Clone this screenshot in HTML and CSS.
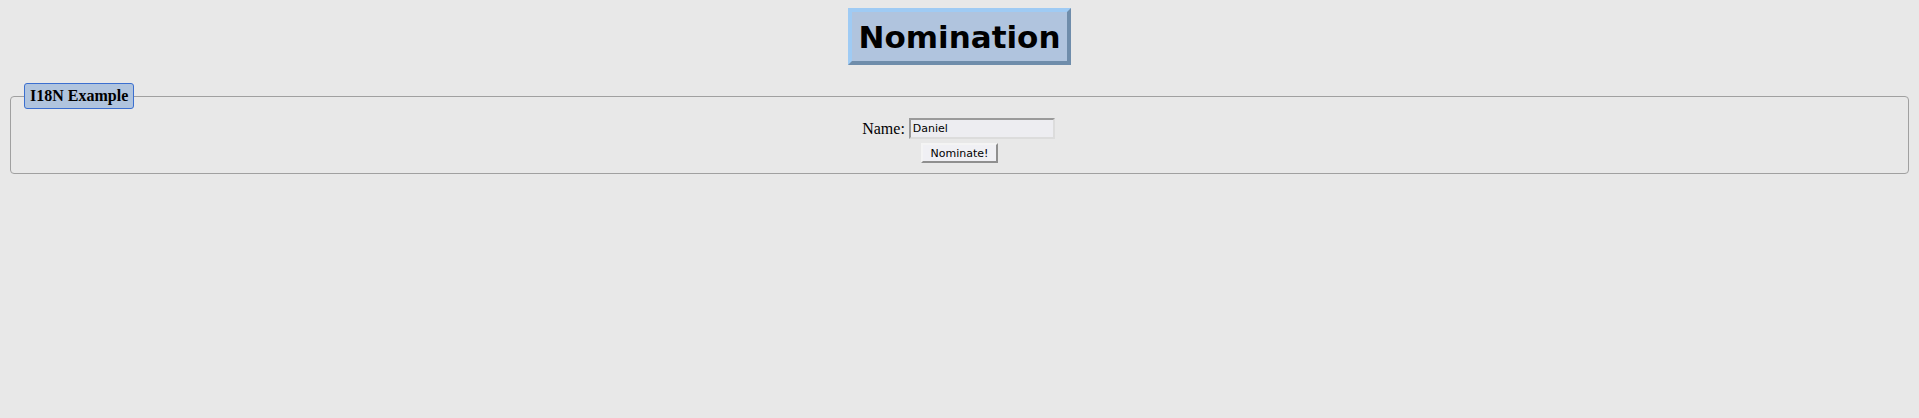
FILE: index.html
```html
<!DOCTYPE html>
<html>
<head>
<meta charset="utf-8">
<title>Nomination</title>
<link rel="stylesheet" href="styles.css">
</head>
<body>
<div class="header">
  <h1 class="title">Nomination</h1>
</div>
<fieldset class="panel">
  <legend class="panel-legend">I18N Example</legend>
  <div class="row">
    <label class="label" for="name">Name:</label>
    <input class="field" id="name" type="text" value="Daniel">
  </div>
  <div class="actions">
    <button class="btn" type="button">Nominate!</button>
  </div>
</fieldset>
</body>
</html>
```
FILE: styles.css
```css
html, body {
  background: #e8e8e8;
}
body {
  margin: 8px;
  font-family: "Liberation Serif", "Times New Roman", serif;
  font-size: 16px;
  color: #000;
}
.header {
  display: flex;
  justify-content: center;
}
.title {
  margin: 0;
  font-family: "DejaVu Sans", Verdana, sans-serif;
  font-weight: bold;
  font-size: 31px;
  line-height: 36px;
  padding: 7px 7px 6px;
  background: #b0c4de;
  border: 4px solid;
  border-color: #9fcbf4 #6f8dab #6f8dab #9fcbf4;
}
.panel {
  margin: 18px 2px 0;
  padding: 0 13px 10px;
  border: 1px solid #a0a0a0;
  border-radius: 4px;
}
.panel-legend {
  padding: 3px 5px;
  font-weight: bold;
  font-size: 16px;
  line-height: 18px;
  background: #b0c4de;
  border: 1px solid #3b6fd0;
  border-radius: 3px;
}
.row {
  display: flex;
  justify-content: center;
  align-items: center;
  gap: 4px;
  margin-top: 9px;
  margin-right: 2px;
}
.label {
  font-size: 16px;
}
.field {
  box-sizing: border-box;
  width: 146px;
  height: 21px;
  margin: 0;
  padding: 0 2px;
  font-family: "DejaVu Sans", Tahoma, sans-serif;
  font-size: 11px;
  color: #000;
  background: #ededf1;
  border: 2px solid;
  border-color: #9a9a9a #dcdcdc #dcdcdc #9a9a9a;
}
.actions {
  display: flex;
  justify-content: center;
  margin-top: 4px;
}
.btn {
  box-sizing: border-box;
  width: 77px;
  height: 20px;
  margin: 0;
  padding: 0;
  font-family: "DejaVu Sans", Tahoma, sans-serif;
  font-size: 11px;
  color: #000;
  background: #f0f0f4;
  border: 2px solid;
  border-color: #f4f4f4 #8f8f8f #8f8f8f #f4f4f4;
}
```
